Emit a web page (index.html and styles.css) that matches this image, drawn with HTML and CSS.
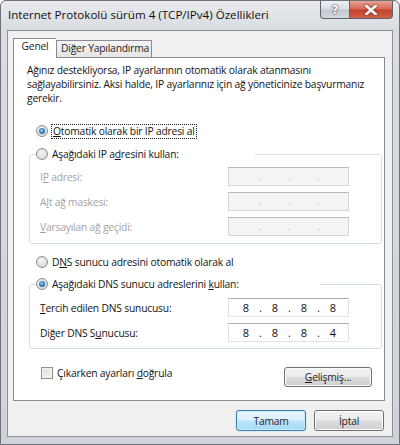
FILE: index.html
```html
<!DOCTYPE html>
<html lang="tr">
<head>
<meta charset="utf-8">
<link rel="stylesheet" href="styles.css">
</head>
<body>
<div class="window">
  <div class="titlebar">
    <span class="title">Internet Protokolü sürüm 4 (TCP/IPv4) Özellikleri</span>
    <div class="caption-buttons">
      <span class="cbtn help">?</span>
      <span class="cbtn close"><svg width="12" height="10" viewBox="0 0 12 10"><path d="M1.5 1 L10.5 9 M10.5 1 L1.5 9" stroke="#fff" stroke-width="2.6" stroke-linecap="square"/></svg></span>
    </div>
  </div>
  <div class="client">
    <div class="tabs">
      <span class="tab active">Genel</span>
      <span class="tab">Diğer Yapılandırma</span>
    </div>
    <div class="panel">
      <p class="intro">Ağınız destekliyorsa, IP ayarlarının otomatik olarak atanmasını<br>sağlayabilirsiniz. Aksi halde, IP ayarlarınız için ağ yöneticinize başvurmanız<br>gerekir.</p>

      <div class="option first-option">
        <span class="radio checked"></span>
        <span class="focus"><u>O</u>tomatik olarak bir IP adresi al</span>
      </div>

      <fieldset class="group ip-group">
        <legend class="legend legend-ip">
          <span class="radio"></span>
          <span>Aşağıdaki IP a<u>d</u>resini kullan:</span>
        </legend>
        <div class="row disabled">
          <span class="label">I<u>P</u> adresi:</span>
          <span class="ipbox off"><span class="seg"></span><span class="dot">.</span><span class="seg"></span><span class="dot">.</span><span class="seg"></span><span class="dot">.</span><span class="seg"></span></span>
        </div>
        <div class="row disabled">
          <span class="label">A<u>l</u>t ağ maskesi:</span>
          <span class="ipbox off"><span class="seg"></span><span class="dot">.</span><span class="seg"></span><span class="dot">.</span><span class="seg"></span><span class="dot">.</span><span class="seg"></span></span>
        </div>
        <div class="row disabled">
          <span class="label"><u>V</u>arsayılan ağ geçidi:</span>
          <span class="ipbox off"><span class="seg"></span><span class="dot">.</span><span class="seg"></span><span class="dot">.</span><span class="seg"></span><span class="dot">.</span><span class="seg"></span></span>
        </div>
      </fieldset>

      <div class="option dns-option">
        <span class="radio"></span>
        <span>D<u>N</u>S sunucu adresini otomatik olarak al</span>
      </div>

      <fieldset class="group dns-group">
        <legend class="legend legend-dns">
          <span class="radio checked"></span>
          <span>Aşağıdaki DNS sunucu adreslerini <u>k</u>ullan:</span>
        </legend>
        <div class="row">
          <span class="label"><u>T</u>ercih edilen DNS sunucusu:</span>
          <span class="ipbox"><span class="seg">8</span><span class="dot">.</span><span class="seg">8</span><span class="dot">.</span><span class="seg">8</span><span class="dot">.</span><span class="seg">8</span></span>
        </div>
        <div class="row">
          <span class="label">Diğer DNS S<u>u</u>nucusu:</span>
          <span class="ipbox"><span class="seg">8</span><span class="dot">.</span><span class="seg">8</span><span class="dot">.</span><span class="seg">8</span><span class="dot">.</span><span class="seg">4</span></span>
        </div>
      </fieldset>

      <div class="bottom-row">
        <div class="check-option">
          <span class="checkbox"></span>
          <span>Çıkarken ayarları <u>d</u>oğrula</span>
        </div>
        <span class="button advanced"><u>G</u>elişmiş...</span>
      </div>
    </div>
    <div class="footer">
      <span class="button default">Tamam</span>
      <span class="button">İptal</span>
    </div>
  </div>
</div>
</body>
</html>
```

FILE: styles.css
```css
* { box-sizing: border-box; }
html, body { margin: 0; padding: 0; background: #fff; }
body {
  font-family: "Open Sans", "Noto Sans", sans-serif;
  font-size: 10.3px;
  letter-spacing: -0.2px;
  color: #141414;
}
u { text-decoration: underline; text-underline-offset: 1px; }

.window {
  width: 400px;
  height: 445px;
  border: 1px solid #6d7279;
  border-radius: 6px 6px 0 0;
  background: linear-gradient(to bottom, #e8eaee 0, #d9dce1 28px, #cfd3d9 100%);
  display: flex;
  flex-direction: column;
}

.titlebar {
  height: 29px;
  display: flex;
  align-items: flex-start;
  padding-left: 7px;
}
.title {
  font-size: 11.6px;
  letter-spacing: 0;
  color: #111;
  line-height: 14px;
  margin-top: 7px;
}
.caption-buttons {
  margin-left: auto;
  margin-right: 6px;
  display: flex;
  height: 18px;
}
.cbtn {
  height: 18px;
  display: flex;
  align-items: center;
  justify-content: center;
  border: 1px solid #5d636b;
  border-top: none;
}
.help {
  width: 29px;
  border-radius: 0 0 0 4px;
  border-right: none;
  background: linear-gradient(to bottom, #eef0f3 0, #d9dde3 45%, #c4c9d0 55%, #d3d8de 100%);
  color: #fff;
  font-family: "DejaVu Sans", sans-serif;
  font-weight: bold;
  font-size: 12px;
  letter-spacing: 0;
  text-shadow: 0 0 2px #444, 0 0 1px #333;
}
.close {
  width: 44px;
  border-radius: 0 0 4px 0;
  background: linear-gradient(to bottom, #e7a396 0, #d66a56 45%, #c2402c 55%, #d3634a 100%);
}
.close svg { filter: drop-shadow(0 0 1px #5a1a10); }

.client {
  margin: 0 6px 0 6px;
  height: 407px;
  border: 1px solid #8d939a;
  background: #f0f0f0;
  padding: 7px 7px 0 5px;
  display: flex;
  flex-direction: column;
}

.tabs {
  display: flex;
  align-items: flex-end;
  height: 19px;
  position: relative;
  z-index: 1;
}
.tab {
  height: 17px;
  border: 1px solid #898c95;
  border-bottom: none;
  background: linear-gradient(to bottom, #f3f3f3, #e5e5e5);
  line-height: 15px;
  padding: 0 0 0 4px;
  white-space: nowrap;
  color: #1e1e1e;
}
.tab.active {
  height: 20px;
  width: 43px;
  text-align: center;
  padding: 0;
  background: #fff;
  margin-bottom: -1px;
  line-height: 15px;
  border-right: none;
}
.tab.active + .tab { width: 96px; }

.panel {
  width: 372px;
  height: 344px;
  border: 1px solid #898c95;
  background: #fff;
  padding: 5px 2px 0 15px;
}

.intro {
  margin: 0 0 0 -2px;
  line-height: 14px;
  white-space: nowrap;
}

.option {
  display: flex;
  align-items: center;
  height: 16px;
  margin-left: 7px;
}
.first-option { margin-top: 18px; }
.dns-option { margin-top: 10px; }

.radio {
  width: 12px;
  height: 12px;
  border-radius: 50%;
  border: 1px solid #8e8f8f;
  background: radial-gradient(circle at 40% 40%, #f4f4f4 0, #dcdcdc 70%, #cfcfcf 100%);
  margin-right: 4px;
  display: flex;
  align-items: center;
  justify-content: center;
  flex: none;
}
.radio.checked::after {
  content: "";
  width: 6px;
  height: 6px;
  border-radius: 50%;
  background: radial-gradient(circle at 45% 40%, #9fd6f7 0, #2a74b8 55%, #0f3d73 100%);
}
.focus {
  outline: 1px dotted #222;
  outline-offset: 0;
  padding: 0 1px;
  line-height: 13px;
}

.group {
  border: 1px solid #d5dfe5;
  border-radius: 3px;
  margin: 7px 0 0 0;
  padding: 0 0 7px 6px;
  min-width: 0;
}
.ip-group { margin-top: 7px; }
.dns-group { margin-top: 6px; padding-bottom: 6px; }

.legend {
  display: flex;
  align-items: center;
  height: 16px;
  padding: 0;
  background: #fff;
}
.legend-ip { width: 219px; }
.legend-dns { width: 284px; }

.row {
  display: flex;
  align-items: center;
  height: 19px;
  margin-top: 6px;
  padding-left: 4px;
}
.ip-group legend + .row { margin-top: 5px; }
.label { width: 188px; }
.disabled .label { color: #a3a3a3; }

.ipbox {
  width: 121px;
  height: 19px;
  border: 1px solid #e2e3ea;
  border-top-color: #abadb3;
  border-left-color: #dbdfe6;
  background: #fff;
  display: flex;
  align-items: center;
  padding-left: 5px;
  font-size: 11px;
  letter-spacing: 0;
  color: #111;
}
.ipbox.off {
  background: #f4f4f4;
  color: #a0a0a0;
  border-color: #d5d5d5;
  border-top-color: #b9b9b9;
}
.seg { width: 24px; text-align: center; }
.dot { width: 5px; text-align: center; }
.off .dot { color: #9a9a9a; font-size: 9px; }

.bottom-row {
  margin-top: 18px;
  display: flex;
  align-items: flex-start;
  padding-right: 10px;
}
.check-option {
  display: flex;
  align-items: center;
  height: 12px;
  margin-left: 12px;
}
.checkbox {
  width: 12px;
  height: 12px;
  border: 1px solid #8e8f8f;
  background: linear-gradient(135deg, #dcdcdc, #f7f7f7);
  box-shadow: inset 0 0 0 1px #f4f4f4;
  margin-right: 4px;
}

.button {
  height: 21px;
  width: 70px;
  border: 1px solid #707070;
  border-radius: 3px;
  background: linear-gradient(to bottom, #f2f2f2 0, #ebebeb 49%, #dddddd 51%, #cfcfcf 100%);
  box-shadow: inset 0 0 0 1px #fcfcfc;
  display: flex;
  align-items: center;
  justify-content: center;
  color: #1e1e1e;
}
.advanced {
  margin-left: auto;
  width: 88px;
  height: 20px;
}
.button.default {
  border-color: #3c7fb1;
  background: linear-gradient(to bottom, #eaf6fd 0, #d9f0fc 49%, #bee6fd 51%, #a7d9f5 100%);
  box-shadow: inset 0 0 0 1px #c6ecfb, 0 0 1px #62bdea;
}

.footer {
  display: flex;
  justify-content: flex-end;
  gap: 8px;
  margin-top: 9px;
  padding-right: 1px;
}
```
